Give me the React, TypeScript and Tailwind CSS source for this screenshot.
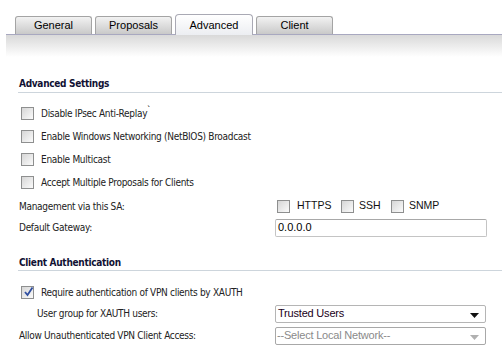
import React from "react";

const Box = ({ checked }: { checked?: boolean }) => (
  <span className="relative inline-block w-[13px] h-[13px] border border-[#8e8f8f] bg-gradient-to-br from-[#d6d6d6] to-[#fbfbfb] shrink-0">
    {checked && (
      <svg className="absolute left-[1px] top-[-1px]" width="11" height="12" viewBox="0 0 11 12">
        <path d="M2 6 L4.5 9 L9.5 1.5" stroke="#2f4ea0" strokeWidth="1.8" fill="none" />
      </svg>
    )}
  </span>
);

const arial = { fontFamily: '"Liberation Sans", Arial, sans-serif' };

const Tab = ({ label, active }: { label: string; active?: boolean }) => (
  <div
    className={
      active
        ? "w-[78px] h-[21px] mb-[-1px] rounded-t-[4px] border border-b-0 border-[#a9a9b4] bg-gradient-to-b from-[#ffffff] to-[#eceef2] flex items-center justify-center text-[11px] text-black"
        : "w-[77px] h-[18px] rounded-t-[3px] border border-b-0 border-[#a4a4a4] bg-gradient-to-b from-[#f2f2f2] to-[#c9c9c9] flex items-center justify-center text-[11px] text-black"
    }
    style={arial}
  >
    {label}
  </div>
);

const Row = ({ children, className = "" }: { children: React.ReactNode; className?: string }) => (
  <div className={"flex items-center " + className}>{children}</div>
);

export default function App() {
  return (
    <div
      className="w-[502px] h-[359px] bg-white overflow-hidden text-[10px] tracking-[-0.3px] text-[#222]"
      style={{ fontFamily: '"DejaVu Sans Condensed", "DejaVu Sans", Tahoma, sans-serif' }}
    >
      <div className="pt-[14px] pl-[6px] tracking-normal">
        <div className="flex items-end gap-[3px] pl-[9px] border-b border-[#a8a8c0]">
          <Tab label="General" />
          <Tab label="Proposals" />
          <Tab label="Advanced" active />
          <Tab label="Client" />
        </div>
        <div className="h-[22px] bg-gradient-to-b from-[#d9d9d9] to-[#ffffff]" />
      </div>

      <div className="pl-[18px]">
        <div className="mt-[19px] h-[15px] flex items-center font-bold text-[#111133] pl-[1px]">Advanced Settings</div>
        <div className="h-px bg-[#cdd5dc] mt-[1px]" />

        <div className="mt-[14px] flex flex-col gap-[10px] pl-[3px]">
          <Row className="h-[13px] gap-[7px]">
            <Box />
            <span>
              Disable IPsec Anti-Replay<sup className="text-[8px] font-bold">`</sup>
            </span>
          </Row>
          <Row className="h-[13px] gap-[7px]">
            <Box />
            <span>Enable Windows Networking (NetBIOS) Broadcast</span>
          </Row>
          <Row className="h-[13px] gap-[7px]">
            <Box />
            <span>Enable Multicast</span>
          </Row>
          <Row className="h-[13px] gap-[7px]">
            <Box />
            <span>Accept Multiple Proposals for Clients</span>
          </Row>
        </div>

        <Row className="mt-[6px] h-[22px] pl-[1px]">
          <span className="w-[258px]">Management via this SA:</span>
          <div className="flex items-center tracking-normal text-[10.5px] text-[#111]" style={arial}>
            <Box />
            <span className="ml-[7px] w-[44px]">HTTPS</span>
            <Box />
            <span className="ml-[5px] w-[32px]">SSH</span>
            <Box />
            <span className="ml-[5px]">SNMP</span>
          </div>
        </Row>
        <Row className="h-[21px] pl-[1px]">
          <span className="w-[256px]">Default Gateway:</span>
          <div
            className="w-[212px] h-[18px] border border-[#c4c4c4] border-t-[#a8a8a8] rounded-[2px] px-[2px] flex items-center text-[11px] tracking-normal text-black"
            style={arial}
          >
            0.0.0.0
          </div>
        </Row>

        <div className="mt-[17px] h-[15px] flex items-center font-bold text-[#111133] pl-[1px]">Client Authentication</div>
        <div className="h-px bg-[#cdd5dc]" />

        <Row className="mt-[15px] h-[13px] gap-[7px] pl-[3px]">
          <Box checked />
          <span>Require authentication of VPN clients by XAUTH</span>
        </Row>
        <Row className="mt-[4px] h-[21px] pl-[19px]">
          <span className="w-[238px]">User group for XAUTH users:</span>
          <div
            className="w-[211px] h-[18px] border border-[#b5b5b5] rounded-[2px] pl-[2px] pr-[6px] flex items-center justify-between text-[11px] tracking-[-0.2px] text-[#1a0020]"
            style={arial}
          >
            <span>Trusted Users</span>
            <svg width="9" height="5" viewBox="0 0 9 5" className="mt-[3px]">
              <path d="M0 0 H9 L4.5 5 Z" fill="#111" />
            </svg>
          </div>
        </Row>
        <Row className="mt-[1px] h-[21px] pl-[1px]">
          <span className="w-[256px]">Allow Unauthenticated VPN Client Access:</span>
          <div
            className="w-[211px] h-[18px] border border-[#a8a8a8] rounded-[2px] pl-[1px] pr-[6px] flex items-center justify-between text-[11px] tracking-[-0.2px] text-[#8a8a8a]"
            style={arial}
          >
            <span>--Select Local Network--</span>
            <svg width="9" height="5" viewBox="0 0 9 5" className="mt-[3px]">
              <path d="M0 0 H9 L4.5 5 Z" fill="#b0b0b0" />
            </svg>
          </div>
        </Row>
      </div>
    </div>
  );
}
